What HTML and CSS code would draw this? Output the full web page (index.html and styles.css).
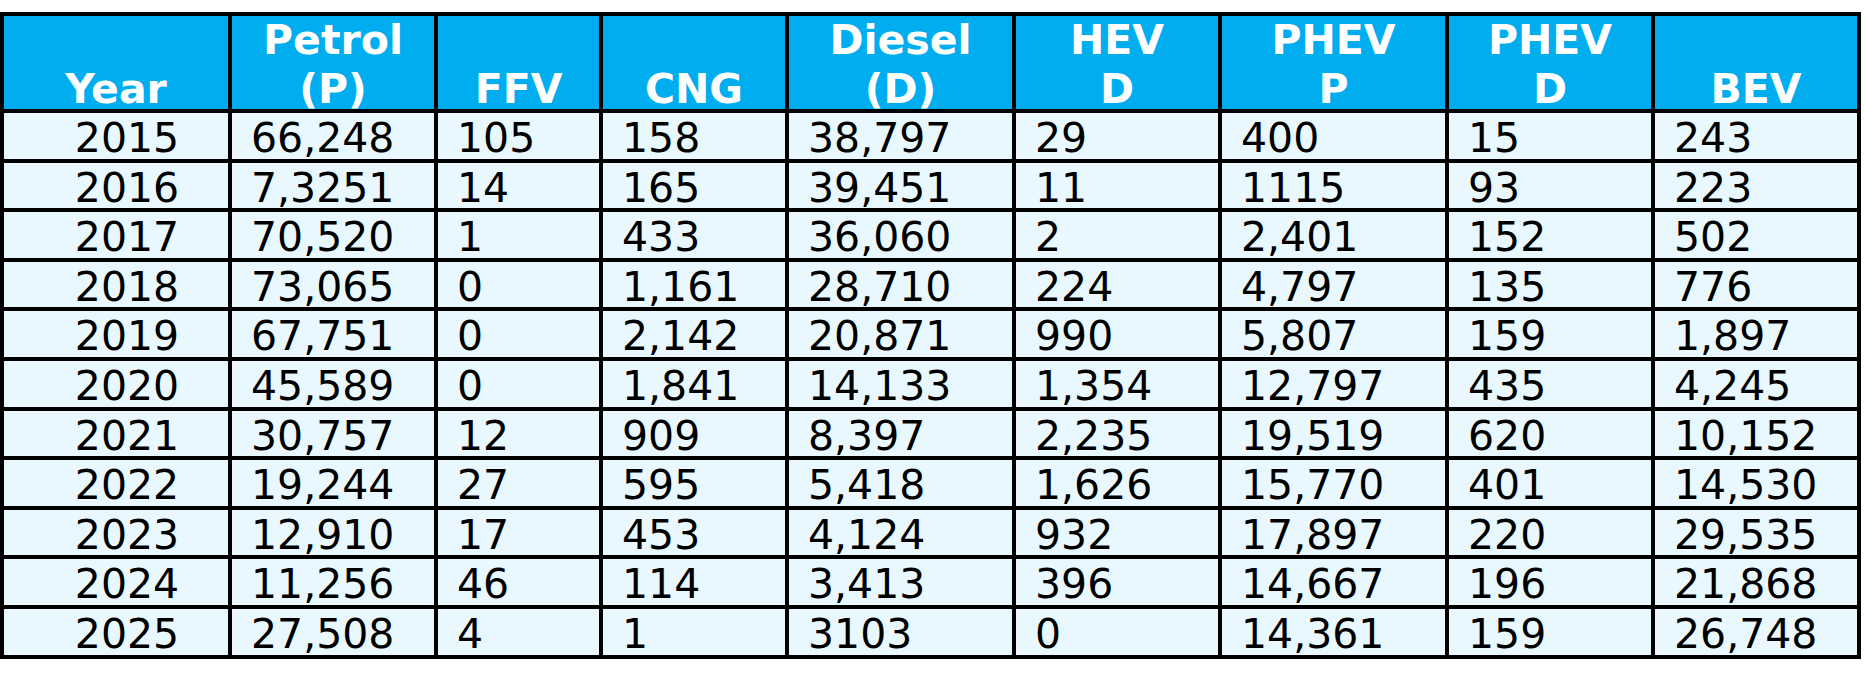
FILE: index.html
```html
<!DOCTYPE html>
<html lang="en">
<head>
<meta charset="utf-8">
<title>Vehicle registrations by fuel type</title>
<link rel="stylesheet" href="styles.css">
</head>
<body>
<div class="table">
  <div class="th"><span>Year</span></div>
  <div class="th"><span>Petrol</span><span>(P)</span></div>
  <div class="th"><span>FFV</span></div>
  <div class="th"><span>CNG</span></div>
  <div class="th"><span>Diesel</span><span>(D)</span></div>
  <div class="th"><span>HEV</span><span>D</span></div>
  <div class="th"><span>PHEV</span><span>P</span></div>
  <div class="th"><span>PHEV</span><span>D</span></div>
  <div class="th"><span>BEV</span></div>

  <div class="td year">2015</div><div class="td">66,248</div><div class="td">105</div><div class="td">158</div><div class="td">38,797</div><div class="td">29</div><div class="td">400</div><div class="td">15</div><div class="td">243</div>
  <div class="td year">2016</div><div class="td">7,3251</div><div class="td">14</div><div class="td">165</div><div class="td">39,451</div><div class="td">11</div><div class="td">1115</div><div class="td">93</div><div class="td">223</div>
  <div class="td year">2017</div><div class="td">70,520</div><div class="td">1</div><div class="td">433</div><div class="td">36,060</div><div class="td">2</div><div class="td">2,401</div><div class="td">152</div><div class="td">502</div>
  <div class="td year">2018</div><div class="td">73,065</div><div class="td">0</div><div class="td">1,161</div><div class="td">28,710</div><div class="td">224</div><div class="td">4,797</div><div class="td">135</div><div class="td">776</div>
  <div class="td year">2019</div><div class="td">67,751</div><div class="td">0</div><div class="td">2,142</div><div class="td">20,871</div><div class="td">990</div><div class="td">5,807</div><div class="td">159</div><div class="td">1,897</div>
  <div class="td year">2020</div><div class="td">45,589</div><div class="td">0</div><div class="td">1,841</div><div class="td">14,133</div><div class="td">1,354</div><div class="td">12,797</div><div class="td">435</div><div class="td">4,245</div>
  <div class="td year">2021</div><div class="td">30,757</div><div class="td">12</div><div class="td">909</div><div class="td">8,397</div><div class="td">2,235</div><div class="td">19,519</div><div class="td">620</div><div class="td">10,152</div>
  <div class="td year">2022</div><div class="td">19,244</div><div class="td">27</div><div class="td">595</div><div class="td">5,418</div><div class="td">1,626</div><div class="td">15,770</div><div class="td">401</div><div class="td">14,530</div>
  <div class="td year">2023</div><div class="td">12,910</div><div class="td">17</div><div class="td">453</div><div class="td">4,124</div><div class="td">932</div><div class="td">17,897</div><div class="td">220</div><div class="td">29,535</div>
  <div class="td year">2024</div><div class="td">11,256</div><div class="td">46</div><div class="td">114</div><div class="td">3,413</div><div class="td">396</div><div class="td">14,667</div><div class="td">196</div><div class="td">21,868</div>
  <div class="td year">2025</div><div class="td">27,508</div><div class="td">4</div><div class="td">1</div><div class="td">3103</div><div class="td">0</div><div class="td">14,361</div><div class="td">159</div><div class="td">26,748</div>
</div>
</body>
</html>
```

FILE: styles.css
```css
html, body {
  margin: 0;
  padding: 0;
  background: #ffffff;
}

body {
  font-family: "DejaVu Sans", Verdana, sans-serif;
  width: 1864px;
  height: 683px;
  overflow: hidden;
}

.table {
  margin-top: 12px;
  width: 1861px;
  box-sizing: border-box;
  display: grid;
  grid-template-columns: 224px 202px 161px 182px 223px 202px 223px 202px 202px;
  grid-template-rows: 93px repeat(11, 45.6px);
  gap: 4px;
  padding: 4px;
  background: #000000;
}

.th {
  background: #00aeef;
  color: #ffffff;
  font-weight: bold;
  font-size: 41px;
  line-height: 40px;
  text-align: center;
  display: flex;
  flex-direction: column;
  justify-content: flex-end;
  gap: 9px;
  box-sizing: border-box;
}

.th span {
  display: block;
}

.td {
  background: #e9f8fe;
  color: #000000;
  font-size: 41px;
  line-height: 40.6px;
  padding: 5px 0 0 19px;
  box-sizing: border-box;
  white-space: nowrap;
}

.td.year {
  text-align: center;
  padding-left: 22px;
}
```
